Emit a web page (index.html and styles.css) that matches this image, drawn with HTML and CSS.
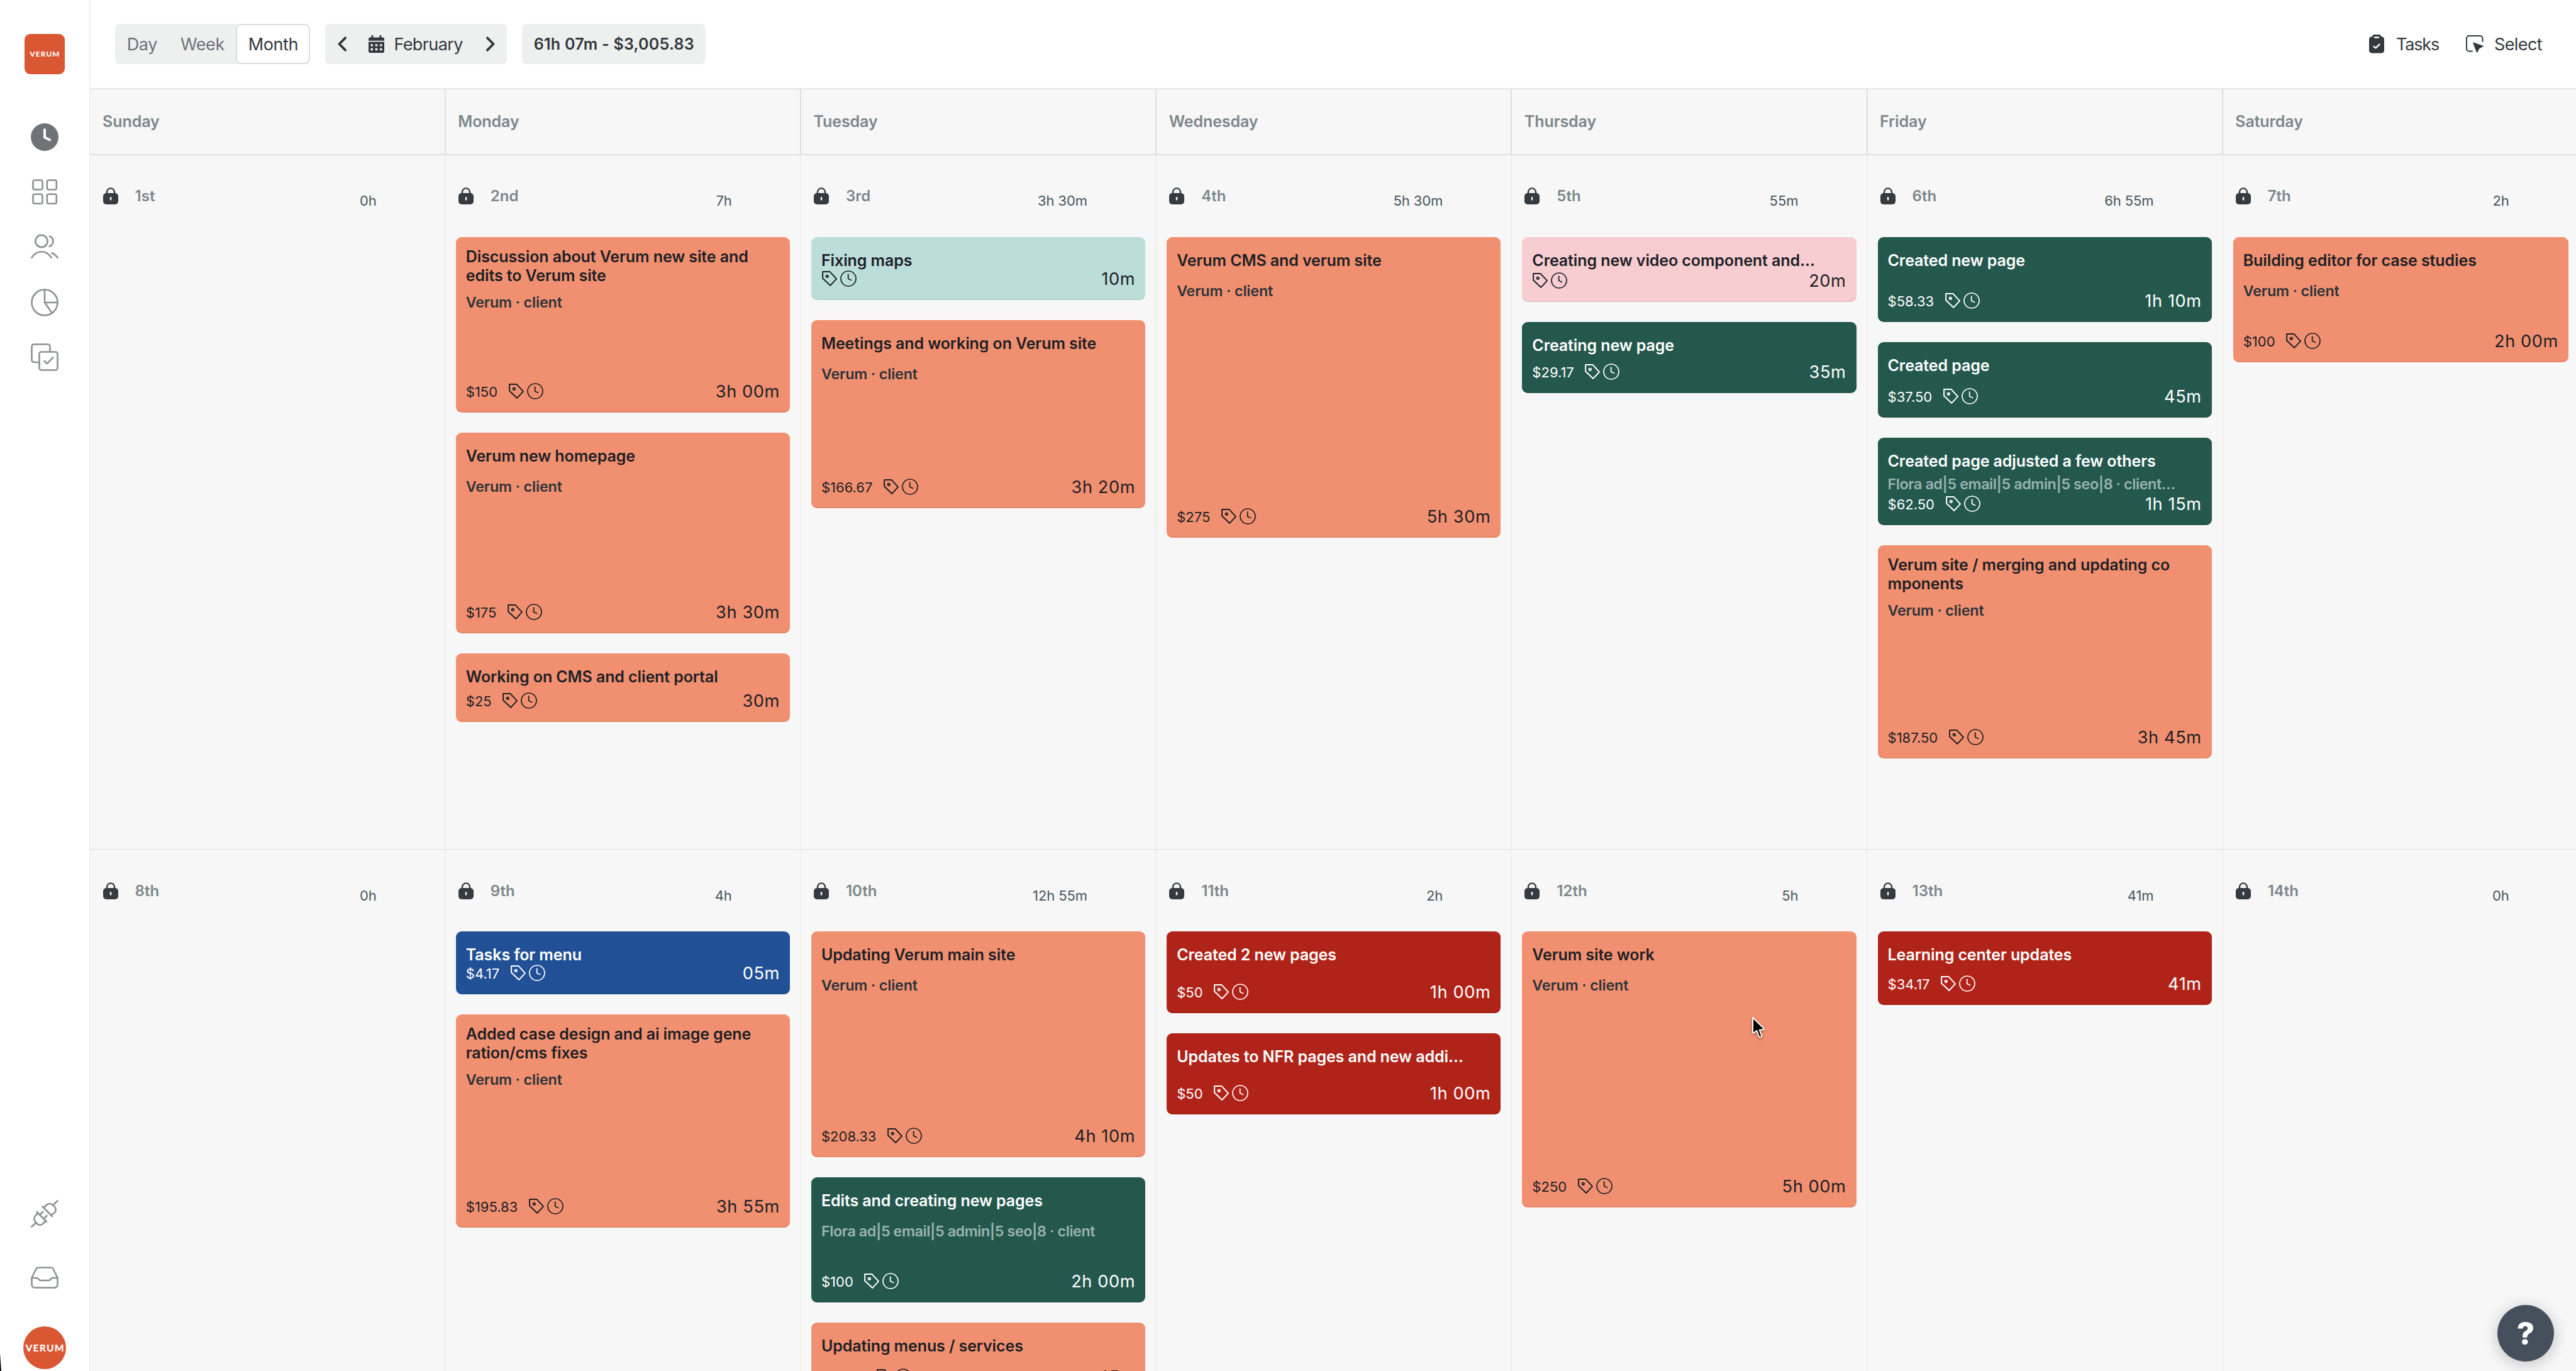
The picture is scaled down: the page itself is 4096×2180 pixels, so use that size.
FILE: index.html
```html
<!DOCTYPE html>
<html lang="en">
<head>
    <meta charset="UTF-8">
    <meta name="viewport" content="width=device-width, initial-scale=1.0">
    <title>Calendar - February</title>
    <link rel="stylesheet" href="styles.css">
</head>
<body>
    <!-- Shared icons -->
    <svg class="sprite" aria-hidden="true">
        <symbol id="tag" viewBox="0 0 24 24">
            <path d="M1.1 1.1H12.6L23 12.4L13.3 22.9L1.1 11.4Z" fill="none" stroke="currentColor" stroke-width="2" stroke-linejoin="round"/>
            <circle cx="8.3" cy="8.3" r="1.7" fill="none" stroke="currentColor" stroke-width="1.9"/>
        </symbol>
        <symbol id="clock" viewBox="0 0 26 26">
            <circle cx="13" cy="13" r="12" fill="none" stroke="currentColor" stroke-width="1.7"/>
            <path d="M12.7 5.5V13.2L18.2 15.8" fill="none" stroke="currentColor" stroke-width="1.8"/>
        </symbol>
        <symbol id="lock" viewBox="0 0 24 27">
            <path d="M6 10V7.6a6 6.2 0 0 1 12 0V10" fill="none" stroke="currentColor" stroke-width="2.4"/>
            <rect x="0" y="9" width="24" height="18" rx="5" fill="currentColor"/>
            <rect x="10.8" y="15" width="2.5" height="5.6" rx="1.2" fill="#f7f7f7"/>
        </symbol>
    </svg>

    <aside class="sidebar">
        <div class="logo"><svg viewBox="0 0 64 64"><text x="8.5" y="36" textLength="47" class="logo-text">VERUM</text></svg></div>
        <nav class="menu">
            <svg class="menu-icon active" viewBox="0 0 44 44">
                <circle cx="22" cy="22" r="22" fill="currentColor"/>
                <path d="M22 10.3V22.5L30 26.3" fill="none" stroke="#fff" stroke-width="4" stroke-linecap="round" stroke-linejoin="round"/>
            </svg>
            <svg class="menu-icon" viewBox="0 0 44 44">
                <rect x="3.5" y="3.5" width="15" height="15" rx="2.5"/>
                <rect x="25.8" y="3.5" width="15" height="15" rx="2.5"/>
                <rect x="3.5" y="25.8" width="15" height="15" rx="2.5"/>
                <rect x="25.8" y="25.8" width="15" height="15" rx="2.5"/>
            </svg>
            <svg class="menu-icon" viewBox="0 0 44 44">
                <circle cx="17" cy="12.5" r="9.6"/>
                <path d="M30 4.5C37.5 8 37 18 29.700 20.800M1.400 38.700C5 33 11 29.200 17 29.200S29 33 32.600 38.700M33.600 31.200C37 32.800 40.500 35.500 42.600 38.700"/>
            </svg>
            <svg class="menu-icon" viewBox="0 0 44 44">
                <circle cx="22" cy="22" r="20.5"/>
                <path d="M22 1.5V22H42.5M22 22L33.5 38.5"/>
            </svg>
            <svg class="menu-icon" viewBox="0 0 44 44">
                <path d="M13 30H5A3.5 3.5 0 0 1 1.5 26.5V5A3.5 3.5 0 0 1 5 1.5H27A3.5 3.5 0 0 1 30.5 5V13"/>
                <rect x="13.5" y="13.5" width="29" height="29" rx="3.5"/>
                <path d="M21.500 28L26 32.200L35.300 22.500"/>
            </svg>
        </nav>
        <div class="menu-bottom">
            <svg class="menu-icon" viewBox="0 0 44 44">
                <path d="M1.500 42.500L8.500 36M42.500 1.500L35.500 8"/>
                <path d="M18.500 10.500L34 26M20.500 12.500L25.500 7.500a7.500 7.500 0 0 1 9.500 0.500L36 9a7.500 7.500 0 0 1 3 9.500a7 7 0 0 1-1.500 2L32.500 24"/>
                <path d="M9.500 19L25 34.500M11.500 21L7 25.500a7.500 7.500 0 0 0 0 9L9.500 37.500a7.500 7.500 0 0 0 9 1L23.500 33.500"/>
                <path d="M14 23.500L19 19M21 29.500L25.500 25"/>
            </svg>
            <svg class="menu-icon inbox" viewBox="0 0 44 44">
                <path d="M1.500 22L8.500 7.500A4 4 0 0 1 12 5.500H32A4 4 0 0 1 35.500 7.500L42.500 22V32.500A5 5 0 0 1 37.500 37.500H6.500A5 5 0 0 1 1.500 32.500Z"/>
                <path d="M1.500 22H9.500C12 22 12.500 26 15.500 26H28.500C31.500 26 32 22 34.500 22H42.500"/>
            </svg>
            <div class="avatar"><svg viewBox="0 0 68 68"><text x="3.5" y="39.5" textLength="61" class="avatar-text">VERUM</text></svg></div>
        </div>
    </aside>

    <main class="main">
        <header class="topbar">
            <div class="views">
                <button class="view day-view">Day</button>
                <button class="view week-view">Week</button>
                <button class="view selected">Month</button>
            </div>
            <div class="month-nav">
                <svg class="chevron" viewBox="0 0 14 24"><path d="M12 2.3L2.5 12L12 21.7"/></svg>
                <svg class="calendar-icon" viewBox="0 0 25 28">
                    <path d="M2.5 3.5H22.5A2.5 2.5 0 0 1 25 6V8.8H0V6A2.5 2.5 0 0 1 2.5 3.5Z M4.5 0H7.3V4.5H4.5Z M17.5 0H20.3V4.5H17.5Z"/>
                    <path fill-rule="evenodd" d="M0 10.4H25V25.5A2.5 2.5 0 0 1 22.5 28H2.5A2.5 2.5 0 0 1 0 25.5ZM3.4 14.2V17.6H7V14.2ZM10.7 14.2V17.6H14.3V14.2ZM18 14.2V17.6H21.6V14.2ZM3.4 20.8V24.2H7V20.8ZM10.7 20.8V24.2H14.3V20.8ZM18 20.8V24.2H21.6V20.8Z"/>
                </svg>
                <span class="month-name">February</span>
                <svg class="chevron" viewBox="0 0 14 24"><path d="M2 2.3L11.5 12L2 21.7"/></svg>
            </div>
            <div class="total">61h 07m - $3,005.83</div>
            <div class="actions">
                <div class="action">
                    <svg class="tasks-icon" viewBox="0 0 24 30">
                        <path d="M5 3C5.5 1 6.5 0 8 0H16C17.5 0 18.5 1 19 3C22.5 3.5 24 5 24 8V25A4.5 4.5 0 0 1 19.5 29.5H4.5A4.5 4.5 0 0 1 0 25V8C0 5 1.5 3.5 5 3Z" fill="currentColor"/>
                        <path d="M9 4.5H15" stroke="#fff" stroke-width="2.4" stroke-linecap="round"/>
                        <path d="M7.5 18.8L10.5 21.3L16.500 15.600" fill="none" stroke="#fff" stroke-width="2.4" stroke-linecap="round" stroke-linejoin="round"/>
                    </svg>
                    <span class="tasks-label">Tasks</span>
                </div>
                <div class="action">
                    <svg class="select-icon" viewBox="0 0 28 28">
                        <path d="M10 25.5H5A4 4 0 0 1 1 21.5V5A4 4 0 0 1 5 1H22.5A4 4 0 0 1 26.5 5V10" fill="none" stroke="currentColor" stroke-width="2" stroke-linecap="round"/>
                        <path d="M12 12.2L27 17.4L20.6 20.9L17.5 26.8Z" fill="currentColor" stroke="currentColor" stroke-width="1.5" stroke-linejoin="round"/>
                    </svg>
                    <span>Select</span>
                </div>
            </div>
        </header>

        <div class="grid weekdays">
            <div class="weekday">Sunday</div>
            <div class="weekday">Monday</div>
            <div class="weekday">Tuesday</div>
            <div class="weekday">Wednesday</div>
            <div class="weekday">Thursday</div>
            <div class="weekday">Friday</div>
            <div class="weekday">Saturday</div>
        </div>

        <!-- Week 1 -->
        <div class="grid week">
            <div class="day">
                <div class="day-head"><svg class="lock"><use href="#lock"/></svg><span class="date">1st</span><span class="hours">0h</span></div>
            </div>
            <div class="day">
                <div class="day-head"><svg class="lock"><use href="#lock"/></svg><span class="date">2nd</span><span class="hours">7h</span></div>
                <div class="entry orange" style="height: 279px">
                    <div class="entry-body"><div class="title">Discussion about Verum new site and<br>edits to Verum site</div><div class="client">Verum · client</div></div>
                    <div class="entry-foot"><span class="price">$150</span><svg class="tag"><use href="#tag"/></svg><svg class="clock"><use href="#clock"/></svg><span class="time">3h 00m</span></div>
                </div>
                <div class="entry orange" style="height: 319px">
                    <div class="entry-body"><div class="title">Verum new homepage</div><div class="client">Verum · client</div></div>
                    <div class="entry-foot"><span class="price">$175</span><svg class="tag"><use href="#tag"/></svg><svg class="clock"><use href="#clock"/></svg><span class="time">3h 30m</span></div>
                </div>
                <div class="entry orange" style="height: 109px">
                    <div class="entry-body"><div class="title">Working on CMS and client portal</div></div>
                    <div class="entry-foot"><span class="price">$25</span><svg class="tag"><use href="#tag"/></svg><svg class="clock"><use href="#clock"/></svg><span class="time">30m</span></div>
                </div>
            </div>
            <div class="day">
                <div class="day-head"><svg class="lock"><use href="#lock"/></svg><span class="date">3rd</span><span class="hours">3h 30m</span></div>
                <div class="entry mint" style="height: 100px">
                    <div class="entry-body"><div class="title">Fixing maps</div></div>
                    <div class="entry-foot"><svg class="tag"><use href="#tag"/></svg><svg class="clock"><use href="#clock"/></svg><span class="time">10m</span></div>
                </div>
                <div class="entry orange" style="height: 299px">
                    <div class="entry-body"><div class="title">Meetings and working on Verum site</div><div class="client">Verum · client</div></div>
                    <div class="entry-foot"><span class="price">$166.67</span><svg class="tag"><use href="#tag"/></svg><svg class="clock"><use href="#clock"/></svg><span class="time">3h 20m</span></div>
                </div>
            </div>
            <div class="day">
                <div class="day-head"><svg class="lock"><use href="#lock"/></svg><span class="date">4th</span><span class="hours">5h 30m</span></div>
                <div class="entry orange" style="height: 478px">
                    <div class="entry-body"><div class="title">Verum CMS and verum site</div><div class="client">Verum · client</div></div>
                    <div class="entry-foot"><span class="price">$275</span><svg class="tag"><use href="#tag"/></svg><svg class="clock"><use href="#clock"/></svg><span class="time">5h 30m</span></div>
                </div>
            </div>
            <div class="day">
                <div class="day-head"><svg class="lock"><use href="#lock"/></svg><span class="date">5th</span><span class="hours">55m</span></div>
                <div class="entry pink" style="height: 103px">
                    <div class="entry-body"><div class="title">Creating new video component and…</div></div>
                    <div class="entry-foot"><svg class="tag"><use href="#tag"/></svg><svg class="clock"><use href="#clock"/></svg><span class="time">20m</span></div>
                </div>
                <div class="entry green" style="height: 113px">
                    <div class="entry-body"><div class="title">Creating new page</div></div>
                    <div class="entry-foot"><span class="price">$29.17</span><svg class="tag"><use href="#tag"/></svg><svg class="clock"><use href="#clock"/></svg><span class="time">35m</span></div>
                </div>
            </div>
            <div class="day">
                <div class="day-head"><svg class="lock"><use href="#lock"/></svg><span class="date">6th</span><span class="hours">6h 55m</span></div>
                <div class="entry green" style="height: 135.5px">
                    <div class="entry-body"><div class="title">Created new page</div></div>
                    <div class="entry-foot"><span class="price">$58.33</span><svg class="tag"><use href="#tag"/></svg><svg class="clock"><use href="#clock"/></svg><span class="time">1h 10m</span></div>
                </div>
                <div class="entry green" style="height: 119.5px">
                    <div class="entry-body"><div class="title">Created page</div></div>
                    <div class="entry-foot"><span class="price">$37.50</span><svg class="tag"><use href="#tag"/></svg><svg class="clock"><use href="#clock"/></svg><span class="time">45m</span></div>
                </div>
                <div class="entry green compact" style="height: 139.5px">
                    <div class="entry-body"><div class="title">Created page adjusted a few others</div><div class="client">Flora ad|5 email|5 admin|5 seo|8 · client…</div></div>
                    <div class="entry-foot"><span class="price">$62.50</span><svg class="tag"><use href="#tag"/></svg><svg class="clock"><use href="#clock"/></svg><span class="time">1h 15m</span></div>
                </div>
                <div class="entry orange" style="height: 339px">
                    <div class="entry-body"><div class="title">Verum site / merging and updating co<br>mponents</div><div class="client">Verum · client</div></div>
                    <div class="entry-foot"><span class="price">$187.50</span><svg class="tag"><use href="#tag"/></svg><svg class="clock"><use href="#clock"/></svg><span class="time">3h 45m</span></div>
                </div>
            </div>
            <div class="day">
                <div class="day-head"><svg class="lock"><use href="#lock"/></svg><span class="date">7th</span><span class="hours">2h</span></div>
                <div class="entry orange" style="height: 199px">
                    <div class="entry-body"><div class="title">Building editor for case studies</div><div class="client">Verum · client</div></div>
                    <div class="entry-foot"><span class="price">$100</span><svg class="tag"><use href="#tag"/></svg><svg class="clock"><use href="#clock"/></svg><span class="time">2h 00m</span></div>
                </div>
            </div>
        </div>

        <!-- Week 2 -->
        <div class="grid week">
            <div class="day">
                <div class="day-head"><svg class="lock"><use href="#lock"/></svg><span class="date">8th</span><span class="hours">0h</span></div>
            </div>
            <div class="day">
                <div class="day-head"><svg class="lock"><use href="#lock"/></svg><span class="date">9th</span><span class="hours">4h</span></div>
                <div class="entry blue" style="height: 99.5px">
                    <div class="entry-body"><div class="title">Tasks for menu</div></div>
                    <div class="entry-foot"><span class="price">$4.17</span><svg class="tag"><use href="#tag"/></svg><svg class="clock"><use href="#clock"/></svg><span class="time">05m</span></div>
                </div>
                <div class="entry orange" style="height: 339px">
                    <div class="entry-body"><div class="title">Added case design and ai image gene<br>ration/cms fixes</div><div class="client">Verum · client</div></div>
                    <div class="entry-foot"><span class="price">$195.83</span><svg class="tag"><use href="#tag"/></svg><svg class="clock"><use href="#clock"/></svg><span class="time">3h 55m</span></div>
                </div>
            </div>
            <div class="day">
                <div class="day-head"><svg class="lock"><use href="#lock"/></svg><span class="date">10th</span><span class="hours">12h 55m</span></div>
                <div class="entry orange" style="height: 359px">
                    <div class="entry-body"><div class="title">Updating Verum main site</div><div class="client">Verum · client</div></div>
                    <div class="entry-foot"><span class="price">$208.33</span><svg class="tag"><use href="#tag"/></svg><svg class="clock"><use href="#clock"/></svg><span class="time">4h 10m</span></div>
                </div>
                <div class="entry green" style="height: 199px">
                    <div class="entry-body"><div class="title">Edits and creating new pages</div><div class="client">Flora ad|5 email|5 admin|5 seo|8 · client</div></div>
                    <div class="entry-foot"><span class="price">$100</span><svg class="tag"><use href="#tag"/></svg><svg class="clock"><use href="#clock"/></svg><span class="time">2h 00m</span></div>
                </div>
                <div class="entry orange" style="height: 119.5px">
                    <div class="entry-body"><div class="title">Updating menus / services</div></div>
                    <div class="entry-foot"><span class="price">$37.50</span><svg class="tag"><use href="#tag"/></svg><svg class="clock"><use href="#clock"/></svg><span class="time">45m</span></div>
                </div>
            </div>
            <div class="day">
                <div class="day-head"><svg class="lock"><use href="#lock"/></svg><span class="date">11th</span><span class="hours">2h</span></div>
                <div class="entry red" style="height: 129.5px">
                    <div class="entry-body"><div class="title">Created 2 new pages</div></div>
                    <div class="entry-foot"><span class="price">$50</span><svg class="tag"><use href="#tag"/></svg><svg class="clock"><use href="#clock"/></svg><span class="time">1h 00m</span></div>
                </div>
                <div class="entry red" style="height: 129.5px">
                    <div class="entry-body"><div class="title">Updates to NFR pages and new addi…</div></div>
                    <div class="entry-foot"><span class="price">$50</span><svg class="tag"><use href="#tag"/></svg><svg class="clock"><use href="#clock"/></svg><span class="time">1h 00m</span></div>
                </div>
            </div>
            <div class="day">
                <div class="day-head"><svg class="lock"><use href="#lock"/></svg><span class="date">12th</span><span class="hours">5h</span></div>
                <div class="entry orange" style="height: 438.5px">
                    <div class="entry-body"><div class="title">Verum site work</div><div class="client">Verum · client</div></div>
                    <div class="entry-foot"><span class="price">$250</span><svg class="tag"><use href="#tag"/></svg><svg class="clock"><use href="#clock"/></svg><span class="time">5h 00m</span></div>
                </div>
            </div>
            <div class="day">
                <div class="day-head"><svg class="lock"><use href="#lock"/></svg><span class="date">13th</span><span class="hours">41m</span></div>
                <div class="entry red" style="height: 117px">
                    <div class="entry-body"><div class="title">Learning center updates</div></div>
                    <div class="entry-foot"><span class="price">$34.17</span><svg class="tag"><use href="#tag"/></svg><svg class="clock"><use href="#clock"/></svg><span class="time">41m</span></div>
                </div>
            </div>
            <div class="day">
                <div class="day-head"><svg class="lock"><use href="#lock"/></svg><span class="date">14th</span><span class="hours">0h</span></div>
            </div>
        </div>
    </main>

    <button class="help">?</button>

    <svg class="cursor" viewBox="0 0 22 36">
        <path d="M2 2V26L3.5 26.5L8.3 22.7L12 32.5Q14 34.5 16.3 31.5L12.8 21.8L19.5 21V19Z" fill="#000" stroke="#fff" stroke-width="2" stroke-linejoin="round"/>
    </svg>
    <div class="window-corner"></div>
</body>
</html>
```
FILE: styles.css
```css
* {
    box-sizing: border-box;
}

body {
    margin: 0;
    display: flex;
    width: 4096px;
    height: 2180px;
    overflow: hidden;
    position: relative;
    background: #fff;
    color: #32383c;
    font-family: Inter, "Open Sans", sans-serif;
}

button {
    border: none;
    background: none;
    padding: 0;
    font-family: inherit;
    color: inherit;
}

svg {
    display: block;
    flex-shrink: 0;
}

.sprite {
    position: absolute;
    width: 0;
    height: 0;
}

/* Sidebar */
.sidebar {
    width: 143.6px;
    flex-shrink: 0;
    padding: 54px 0 3px;
    border-right: 2px solid #efefef;
    display: flex;
    flex-direction: column;
    align-items: center;
}

.logo {
    width: 64px;
    height: 64px;
    border-radius: 9px;
    background: #d95733;
}

.logo-text, .avatar-text {
    font-family: Lato, sans-serif;
    font-weight: 900;
    fill: #fff;
}

.logo-text {
    font-size: 11.8px;
}

.avatar-text {
    font-size: 15.6px;
}

.menu {
    display: flex;
    flex-direction: column;
    gap: 43.7px;
    margin-top: 77.5px;
}

.menu-icon {
    width: 44px;
    height: 44px;
    fill: none;
    stroke: #8c9194;
    stroke-width: 2.6;
    stroke-linecap: round;
    stroke-linejoin: round;
    color: #6f7478;
}

.menu-icon.active {
    stroke: none;
}

.menu-bottom {
    margin-top: auto;
    display: flex;
    flex-direction: column;
    align-items: center;
}

.inbox {
    margin: 58px 0 55px;
}

.avatar {
    width: 68px;
    height: 68px;
    border-radius: 50%;
    background: #d95733;
}

/* Top bar */
.main {
    flex: 1;
    min-width: 0;
    height: 2180px;
    overflow: hidden;
    background: #f7f7f7;
}

.topbar {
    height: 141.6px;
    padding: 38px 54px 0 39.8px;
    display: flex;
    align-items: flex-start;
    gap: 24px;
    background: #fff;
    border-bottom: 2px solid #e6e6e6;
    font-size: 27px;
    letter-spacing: -0.6px;
}

.views, .month-nav, .total {
    display: flex;
    align-items: center;
    height: 64px;
    border-radius: 8px;
    background: #eef0f0;
}

.view {
    height: 64px;
    font-size: 27px;
    letter-spacing: -0.4px;
    color: #6d7278;
}

.day-view {
    width: 85px;
}

.week-view {
    width: 107px;
}

.view.selected {
    width: 118px;
    border: 2px solid #dedede;
    border-radius: 8px;
    background: #fff;
    color: #32383c;
}

.month-nav {
    width: 289px;
    padding-left: 20px;
}

.chevron {
    width: 14px;
    height: 24px;
    fill: none;
    stroke: #32383c;
    stroke-width: 3.8;
    stroke-linecap: round;
    stroke-linejoin: round;
}

.calendar-icon {
    width: 25px;
    height: 28px;
    margin-left: 35px;
    fill: #32383c;
}

.month-name {
    width: 147px;
    margin-left: 15px;
}

.total {
    width: 292px;
    justify-content: center;
    font-size: 25px;
    font-weight: 600;
    letter-spacing: 0.26px;
}

.actions {
    display: flex;
    gap: 43px;
    margin-left: auto;
    height: 64px;
}

.action {
    display: flex;
    align-items: center;
    gap: 17px;
}

.tasks-icon {
    width: 24px;
    height: 30px;
}

.tasks-label {
    letter-spacing: -1.2px;
    margin-left: 2px;
}

.select-icon {
    width: 28px;
    height: 28px;
}

/* Calendar grid */
.grid {
    display: grid;
    grid-template-columns: repeat(6, 565.2px) 1fr;
}

.weekdays {
    height: 105.6px;
    border-bottom: 2px solid #dedede;
}

.weekday {
    display: flex;
    align-items: center;
    padding-left: 19.5px;
    border-right: 2px solid #dcdfe0;
    font-size: 25px;
    font-weight: 600;
    letter-spacing: -0.1px;
    color: #7c878b;
}

.week {
    height: 1104.7px;
    border-bottom: 2px solid #e8e8e8;
}

.day {
    border-right: 2px solid #efefef;
    padding: 0 16px;
    display: flex;
    flex-direction: column;
    gap: 32px;
}

.weekday:last-child, .day:last-child {
    border-right: none;
}

.day:last-child {
    padding-right: 12px;
}

.day-head {
    height: 129.6px;
    width: 439px;
    margin-bottom: -32px;
    padding-left: 4px;
    display: flex;
    align-items: center;
}

.lock {
    width: 24px;
    height: 27px;
    color: #353b40;
}

.date {
    margin-left: 27px;
    font-size: 24px;
    font-weight: 600;
    letter-spacing: 0;
    color: #7c878b;
}

.hours {
    margin: 15px 0 0 auto;
    font-size: 22px;
    letter-spacing: -0.1px;
    color: #46555c;
}

/* Time entries */
.entry {
    display: flex;
    flex-direction: column;
    flex-shrink: 0;
    padding: 16px 16px 21px;
    border-radius: 9px;
    box-shadow: inset 0 -2px rgba(0, 0, 0, 0.06);
    color: #1d2025;
    white-space: nowrap;
}

.entry-body {
    flex: 1 1 0;
    min-height: 0;
}

.title {
    min-height: 42px;
    display: grid;
    align-content: center;
    font-size: 25px;
    line-height: 30px;
    font-weight: 600;
    letter-spacing: -0.1px;
}

.client {
    margin-top: 14px;
    font-size: 23.3px;
    line-height: 28px;
    font-weight: 600;
    letter-spacing: -0.15px;
    color: #2c3338;
}

.compact .client {
    margin-top: 2px;
}

.entry-foot {
    height: 26px;
    display: flex;
    align-items: flex-start;
    line-height: 28px;
}

.price {
    margin-right: 16.5px;
    font-size: 22px;
}

.tag {
    width: 24px;
    height: 24px;
    margin: 1px 5px 0 1px;
}

.clock {
    width: 26px;
    height: 26px;
}

.time {
    margin-left: auto;
    font-size: 27.2px;
    letter-spacing: 0.6px;
}

.orange {
    background: #f19070;
}

.mint {
    background: #bcdedb;
}

.pink {
    background: #f7cdd1;
}

.green {
    background: #24584d;
    color: #fff;
}

.blue {
    background: #225096;
    color: #fff;
}

.red {
    background: #b02318;
    color: #fff;
}

.green .client {
    color: #9ab3ae;
    letter-spacing: -0.4px;
}

/* Floating items */
.help {
    position: absolute;
    right: 35px;
    bottom: 15px;
    width: 90px;
    height: 90px;
    border-radius: 50%;
    background: #46505c;
    color: #fff;
    font-size: 49px;
    font-weight: 800;
    box-shadow: 0 4px 24px rgba(0, 0, 0, 0.22);
}

.cursor {
    position: absolute;
    left: 2785px;
    top: 1616px;
    width: 22px;
    height: 36px;
    overflow: visible;
    filter: drop-shadow(0 2px 2px rgba(0, 0, 0, 0.35));
}

.window-corner {
    position: absolute;
    left: 0;
    bottom: 0;
    width: 2px;
    height: 28px;
    background: #000;
    clip-path: polygon(0 0, 100% 100%, 0 100%);
}
```
